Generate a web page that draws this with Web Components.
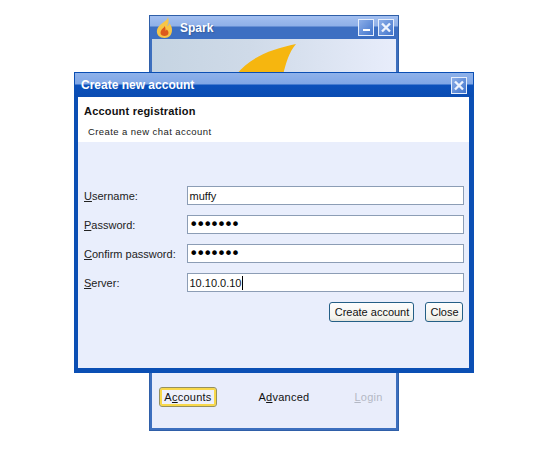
<!DOCTYPE html>
<html><head><meta charset="utf-8"><style>
html,body{margin:0;padding:0;background:#fff;width:550px;height:456px;overflow:hidden}
body{position:relative;font-family:"Liberation Sans",Arial,sans-serif;font-size:11px;color:#111}
back-window{position:absolute;left:149px;top:15px;width:250px;height:416px}
front-window{position:absolute;left:74px;top:72px;width:400px;height:301px}
</style></head><body>
<back-window>
<tab-button slot="tabs" state="focus" key="c" pre="A" post="counts" style="margin-left:7px;width:58px"></tab-button>
<tab-button slot="tabs" state="plain" key="d" pre="A" post="vanced" style="margin-left:41px;width:52px"></tab-button>
<tab-button slot="tabs" state="off" key="L" pre="" post="ogin" style="margin-left:44px;width:29px"></tab-button>
</back-window>
<front-window>
<form-row label-pre="" label-key="U" label-post="sername:" value="muffy"></form-row>
<form-row label-pre="" label-key="P" label-post="assword:" value="•••••••" secret></form-row>
<form-row label-pre="" label-key="C" label-post="onfirm password:" value="•••••••" secret></form-row>
<form-row label-pre="" label-key="S" label-post="erver:" value="10.10.0.10" caret></form-row>
<push-button slot="actions" style="width:85px">Create account</push-button>
<push-button slot="actions" style="width:38px;margin-left:11px">Close</push-button>
</front-window>
<script>
const GRAD='<defs><linearGradient id="g" x1="0" y1="0" x2="1" y2="1"><stop offset="0" stop-color="#8fb0e8"/><stop offset="1" stop-color="#3f73cc"/></linearGradient></defs>';
const CLOSE='<svg width="16" height="17" viewBox="0 0 16 17">'+GRAD+'<rect x=".5" y=".5" width="15" height="16" fill="url(#g)" stroke="#e6eefb"/><path d="M4 4.5l8 8M12 4.5l-8 8" stroke="#eef3fd" stroke-width="2.4" fill="none"/></svg>';
const MIN='<svg width="16" height="17" viewBox="0 0 16 17">'+GRAD+'<rect x=".5" y=".5" width="15" height="16" fill="url(#g)" stroke="#e6eefb"/><rect x="5" y="10" width="7" height="2" fill="#fff"/></svg>';
class BackWindow extends HTMLElement{constructor(){super();this.attachShadow({mode:'open'}).innerHTML=`<style>
:host{display:flex;flex-direction:column;box-sizing:border-box;border:1px solid #2f5fa8;background:#3d6fbe}
.bar{height:23px;display:flex;align-items:center;flex:none;padding:0 4px 0 6px;background:linear-gradient(#a3bff0 0,#8fb0e8 10px,#3d6fc2 11px,#3d6fc2 100%);color:#fff;font:bold 12px "Liberation Sans",sans-serif;text-shadow:1px 1px 1px #3a5f9f}
.bar span{margin-left:7px;flex:1}
svg{display:block}.btns{display:flex;gap:4px}
.art{margin:0 2px;flex:1;position:relative;background:linear-gradient(90deg,#c5d4e2 0,#cfdae8 40%,#e8edfb 100%)}
.tabs{margin:0 2px;height:55px;flex:none;display:flex;align-items:flex-start;padding-top:14px;box-sizing:border-box;background:#e9edfb}
.foot{height:2px;flex:none}
</style>
<div class="bar"><svg width="17" height="21" viewBox="0 0 17 21"><path d="M12 0C12 4 2 7 1 13c-1 5 3 8 7.500 8S16 18 16 13c0-3-1-5-3-7 0 2-1 3-2 3 2-3 2-6 1-9z" fill="#f7c648"/><path d="M8.500 9c0 2-4 3-4 7 0 2 2 3 4 3s4-1 4-3c0-2-1-3-2-3.500 0 1-1 1-1 1 0-2 0-3-1-4.500z" fill="#dd5a1c"/></svg><span>Spark</span><div class="btns">${MIN}${CLOSE}</div></div>
<div class="art"><svg style="position:absolute;left:84px;top:4px" width="64" height="32" viewBox="0 0 64 32"><path d="M60 1C36 6 14 14 0 32H47C50 20 53 9 60 1z" fill="#f6b60f"/></svg></div>
<div class="tabs"><slot name="tabs"></slot></div><div class="foot"></div>`}}
customElements.define('back-window',BackWindow);
class TabButton extends HTMLElement{constructor(){super();const s=this.getAttribute('state');this.attachShadow({mode:'open'}).innerHTML=`<style>
:host{display:block;box-sizing:border-box;height:20px;flex:none;font:11px "Liberation Sans",sans-serif;letter-spacing:.25px;color:${s==='off'?'#b4b8c4':'#111'}}
div{box-sizing:border-box;height:100%;display:flex;align-items:center;justify-content:center;${s==='focus'?'border:1px solid #97915c;border-radius:3px;box-shadow:inset 0 0 0 2px #f8d84a;background:#eef0fb;':''}}
u{text-decoration:underline}
</style><div><span>${this.getAttribute('pre')}<u>${this.getAttribute('key')}</u>${this.getAttribute('post')}</span></div>`}}
customElements.define('tab-button',TabButton);
class FrontWindow extends HTMLElement{constructor(){super();this.attachShadow({mode:'open'}).innerHTML=`<style>
:host{display:flex;flex-direction:column;box-sizing:border-box;border:solid #0b4fb4;border-width:1px 5px 5px 4px;background:#e9eefc}
.bar{height:24px;flex:none;margin:0 -4px 0 -3px;padding:0 6px;display:flex;align-items:center;justify-content:space-between;background:linear-gradient(#8fb2ea 0,#7fa6e6 11px,#0b50bb 12px,#0a4cb2 100%);color:#fff;font:bold 12px "Liberation Sans",sans-serif;box-sizing:border-box}
svg{display:block}
.head{height:45px;flex:none;background:#fff;box-sizing:border-box;padding:8px 0 0 6px}
h1{margin:0;font:bold 11px "Liberation Sans",sans-serif;letter-spacing:.2px;color:#111;line-height:13px}
p{margin:8px 0 0 4px;font:9.5px "Liberation Sans",sans-serif;letter-spacing:.42px;line-height:12px;color:#222}
.form{flex:1;display:flex;flex-direction:column;padding:44px 5px 0 6px}
.rows{display:grid;gap:10px}
.actions{display:flex;justify-content:flex-end;margin-top:10px;padding-right:1px}
</style><div class="bar"><span>Create new account</span>${CLOSE}</div>
<div class="head"><h1>Account registration</h1><p>Create a new chat account</p></div>
<div class="form"><div class="rows"><slot></slot></div><div class="actions"><slot name="actions"></slot></div></div>`}}
customElements.define('front-window',FrontWindow);
class FormRow extends HTMLElement{constructor(){super();const a=n=>this.getAttribute(n)||'';this.attachShadow({mode:'open'}).innerHTML=`<style>
:host{display:grid;grid-template-columns:103px 277px;height:19px;align-items:center;font:11px "Liberation Sans",sans-serif;color:#222}
.f{box-sizing:border-box;height:19px;border:1px solid #8c9db5;background:#fff;display:flex;align-items:center;padding-left:1.500px;color:#111;white-space:pre}
.s{font:16px/1 "DejaVu Sans",sans-serif;letter-spacing:-2.5px;color:#000;padding-left:1px}
i{display:inline-block;width:1px;height:14px;background:#000}
</style><label><u>${a('label-key')}</u>${a('label-post')}</label><div class="f ${this.hasAttribute('secret')?'s':''}">${a('value')}${this.hasAttribute('caret')?'<i></i>':''}</div>`}}
customElements.define('form-row',FormRow);
class PushButton extends HTMLElement{constructor(){super();this.attachShadow({mode:'open'}).innerHTML=`<style>
:host{display:flex;box-sizing:border-box;height:20px;padding-left:1px;align-items:center;justify-content:center;border:1px solid #245f86;border-radius:3px;background:linear-gradient(#fdfdfd,#f3f3ee 80%,#e4e4dc);font:11px "Liberation Sans",sans-serif;color:#111}
</style><slot></slot>`}}
customElements.define('push-button',PushButton);
</script>
</body></html>
